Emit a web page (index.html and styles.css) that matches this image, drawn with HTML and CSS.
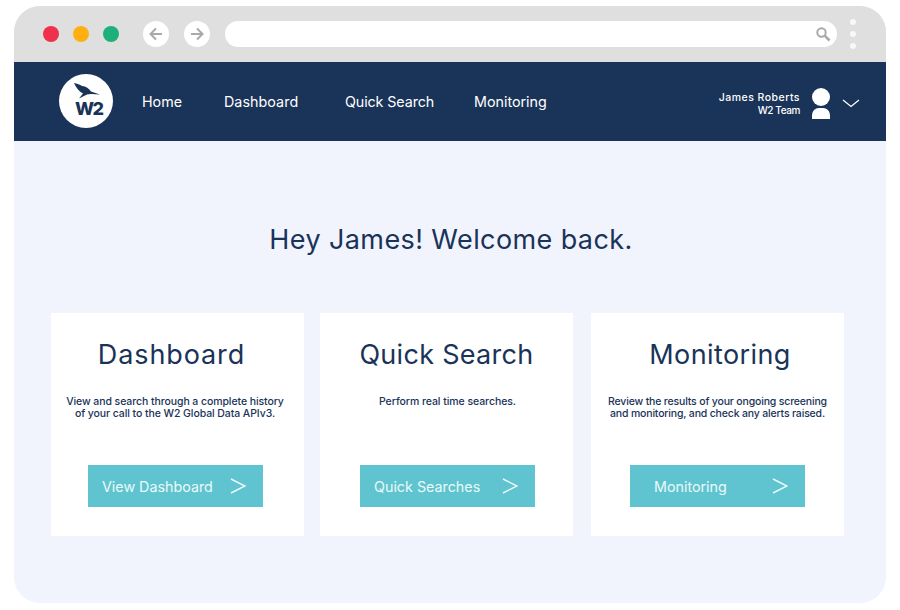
FILE: index.html
```html
<!DOCTYPE html>
<html lang="en">
<head>
<meta charset="utf-8">
<title>W2 Global Data</title>
<link rel="stylesheet" href="styles.css">
</head>
<body>
<div class="window">
  <div class="chrome">
    <div class="lights"><span class="light red"></span><span class="light amber"></span><span class="light green"></span></div>
    <div class="arrows">
      <span class="round"><svg width="16" height="16" viewBox="0 0 16 16"><path d="M14 8H2.500M8 2.500 2.500 8 8 13.500" fill="none" stroke="#a9a9a9" stroke-width="2"/></svg></span>
      <span class="round"><svg width="16" height="16" viewBox="0 0 16 16"><path d="M2 8h11.500M8 2.500 13.500 8 8 13.500" fill="none" stroke="#a9a9a9" stroke-width="2"/></svg></span>
    </div>
    <div class="address"><svg width="16" height="16" viewBox="0 0 16 16"><circle cx="6.500" cy="6.500" r="4.200" fill="none" stroke="#a9a9a9" stroke-width="2"/><path d="M9.700 9.700 14.500 14.500" stroke="#a9a9a9" stroke-width="2.600"/></svg></div>
    <div class="dots"><span></span><span></span><span></span></div>
  </div>
  <nav class="nav">
    <div class="logo">
      <svg class="bird" width="26" height="16" viewBox="0 0 26 16"><path d="M0 0C3 .5 6 1.500 8 3C12 3 15 5.500 17 8.500L26 11.500L17 11L13 11.500L5 15.500L9 10.500C5 8.500 2 4.500 0 0Z" fill="#1a3358"/></svg>
      <span class="logo-text">W2</span>
    </div>
    <div class="links">
      <a class="link link-home">Home</a>
      <a class="link link-dash">Dashboard</a>
      <a class="link link-search">Quick Search</a>
      <a class="link">Monitoring</a>
    </div>
    <div class="user">
      <div class="user-text"><div class="user-name">James Roberts</div><div class="user-team">W2 Team</div></div>
      <div class="avatar"><span class="head"></span><span class="body-shape"></span></div>
      <svg class="chev" width="18" height="9" viewBox="0 0 18 9"><path d="M1 1 9 7.500 17 1" fill="none" stroke="#fff" stroke-width="1.300"/></svg>
    </div>
  </nav>
  <main class="main">
    <h1 class="welcome">Hey James! Welcome back.</h1>
    <div class="cards">
      <section class="card card-dash">
        <h2 class="card-title">Dashboard</h2>
        <p class="card-text">View and search through a complete history<br>of your call to the W2 Global Data APIv3.</p>
        <a class="btn"><span>View Dashboard</span><svg width="16" height="16" viewBox="0 0 16 16"><path d="M1 1 15 8 1 15" fill="none" stroke="#eafafa" stroke-width="1.500"/></svg></a>
      </section>
      <section class="card card-search">
        <h2 class="card-title">Quick Search</h2>
        <p class="card-text">Perform real time searches.</p>
        <a class="btn"><span>Quick Searches</span><svg width="16" height="16" viewBox="0 0 16 16"><path d="M1 1 15 8 1 15" fill="none" stroke="#eafafa" stroke-width="1.500"/></svg></a>
      </section>
      <section class="card card-mon">
        <h2 class="card-title">Monitoring</h2>
        <p class="card-text">Review the results of your ongoing screening<br>and monitoring, and check any alerts raised.</p>
        <a class="btn"><span>Monitoring</span><svg width="16" height="16" viewBox="0 0 16 16"><path d="M1 1 15 8 1 15" fill="none" stroke="#eafafa" stroke-width="1.500"/></svg></a>
      </section>
    </div>
  </main>
</div>
</body>
</html>
```
FILE: styles.css
```css
* { box-sizing: border-box; }
html, body { margin: 0; background: #fff; }
body { font-family: Inter, "Liberation Sans", sans-serif; color: #1a3358; }
.window { width: 872px; height: 597px; margin: 6px 14px 7px; border-radius: 26px; overflow: hidden; background: #f1f4fd; display: flex; flex-direction: column; }
.chrome { height: 56px; flex: none; background: #dfdfdf; display: flex; align-items: center; padding: 0 28px 0 28.500px; }
.lights { display: flex; gap: 14px; }
.light { width: 16px; height: 16px; border-radius: 50%; }
.red { background: #f0314b; }
.amber { background: #feb012; }
.green { background: #1eb07a; }
.arrows { display: flex; gap: 15px; margin-left: 24.500px; }
.round { width: 26px; height: 26px; border-radius: 50%; background: #fff; display: flex; align-items: center; justify-content: center; }
.address { width: 612px; height: 26px; margin-left: 15px; border-radius: 13px; background: #fff; display: flex; align-items: center; justify-content: flex-end; padding-right: 6px; }
.dots { margin-left: 13px; display: flex; flex-direction: column; gap: 6px; }
.dots span { width: 6px; height: 6px; border-radius: 50%; background: #f8f8f8; }
.nav { height: 79px; flex: none; background: #1a3358; display: flex; align-items: center; padding: 0 26px 0 45px; color: #fff; }
.logo { width: 54px; height: 54px; margin-bottom: 2px; border-radius: 50%; background: #fff; flex: none; position: relative; }
.bird { position: absolute; left: 15px; top: 9px; }
.logo-text { position: absolute; left: 16px; top: 26px; font-size: 18px; line-height: 18px; font-weight: 800; letter-spacing: -1.600px; color: #1a3358; }
.links { display: flex; margin-left: 29px; font-size: 14.300px; font-weight: 400; }
.link { color: #fff; white-space: nowrap; }
.link-home { width: 82px; }
.link-dash { width: 121px; letter-spacing: 0.050px; }
.link-search { width: 129px; letter-spacing: -0.100px; }
.user { margin-left: auto; display: flex; align-items: center; padding-top: 4px; }
.user-text { text-align: right; font-size: 10.500px; line-height: 12px; font-weight: 500; }
.user-name { letter-spacing: 0.480px; }
.user-team { letter-spacing: -0.400px; font-size: 10px; }
.avatar { width: 18px; margin-left: 12px; display: flex; flex-direction: column; align-items: center; gap: 2px; margin-top: -1px; }
.head { width: 18px; height: 18px; border-radius: 50%; background: #fff; }
.body-shape { width: 18px; height: 11px; border-radius: 7px 7px 0 0; background: #fff; }
.chev { margin-left: 12px; margin-top: 0; }
.main { flex: 1; padding: 0 37px; }
.welcome { margin: 81px 0 0; height: 36px; font-size: 27px; line-height: 36px; font-weight: 400; text-align: center; letter-spacing: 0.400px; padding-left: 2px; }
.cards { display: flex; gap: 16px; margin-top: 55px; }
.card { width: 253px; height: 223px; background: #fff; display: flex; flex-direction: column; align-items: center; }
.card-mon { margin-left: 2px; }
.card-title { margin: 23px 0 0; font-size: 27px; line-height: 38px; font-weight: 400; letter-spacing: 0.300px; }
.card-text { margin: 22px 0 0; height: 44px; font-size: 10.500px; line-height: 12px; font-weight: 500; text-align: center; letter-spacing: -0.100px; white-space: nowrap; }
.btn { margin-top: 25px; width: 175px; height: 42px; background: #5fc4cf; color: #eafafa; display: flex; align-items: center; justify-content: space-between; font-size: 14.300px; padding: 0 17px 0 14px; white-space: nowrap; }
.card-dash .card-title { margin-right: 12px; letter-spacing: 0.900px; }
.card-dash .card-text { margin-right: 5px; letter-spacing: -0.080px; }
.card-dash .btn { margin-left: -4px; }
.card-search .card-text { margin-left: 2px; letter-spacing: -0.060px; }
.card-search .btn { margin-left: 2px; }
.card-mon .card-title { margin-left: 5px; letter-spacing: 0.400px; }
.card-mon .card-text { letter-spacing: -0.170px; }
.card-mon .btn { padding-left: 24px; }
```
